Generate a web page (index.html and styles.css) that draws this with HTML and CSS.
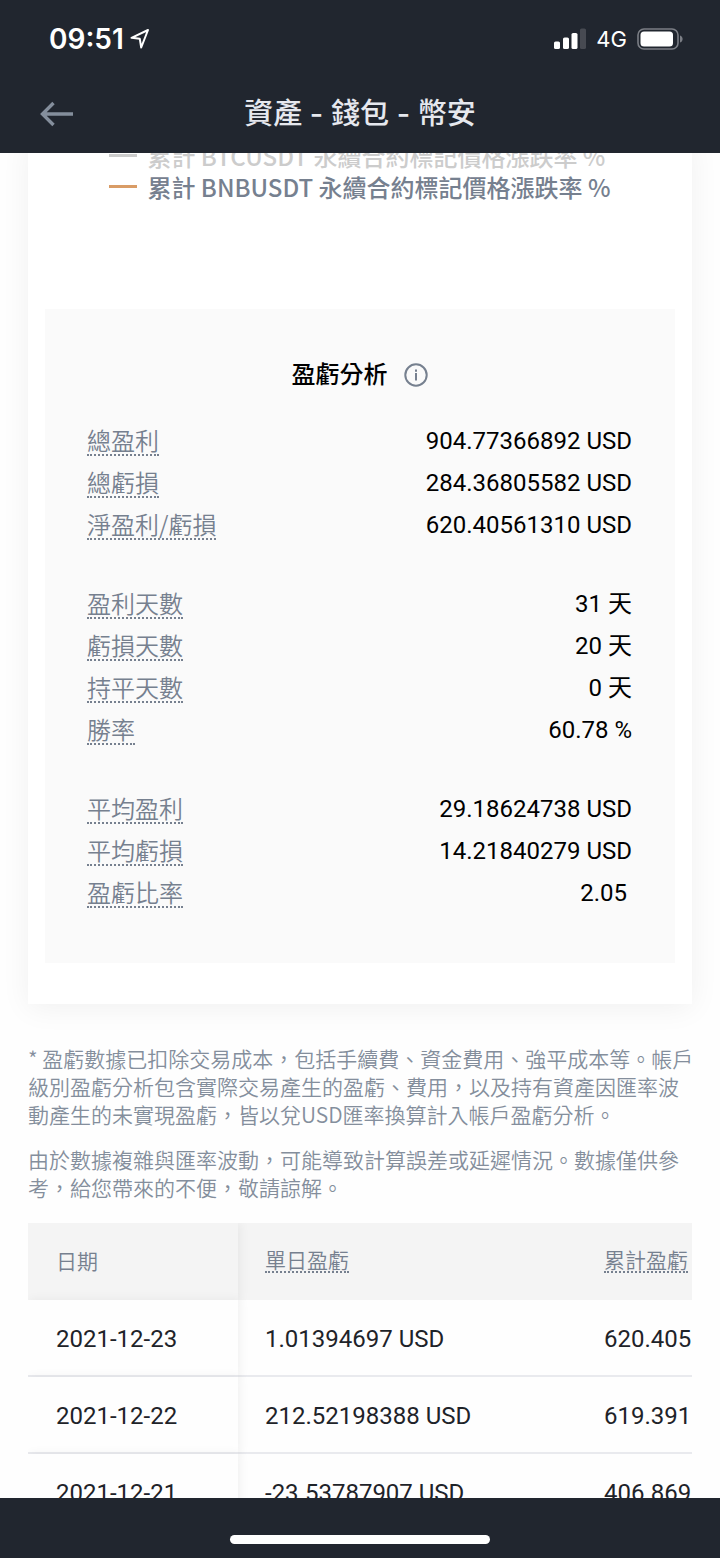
FILE: index.html
```html
<!DOCTYPE html>
<html lang="zh-Hant">
<head>
    <meta charset="UTF-8">
    <meta name="viewport" content="width=device-width, initial-scale=1.0">
    <title>資產 - 錢包 - 幣安</title>
    <link rel="stylesheet" href="styles.css">
</head>
<body>
    <header class="top">
        <div class="status-bar">
            <div class="status-time">
                <span>09:51</span>
                <svg width="20" height="22" viewBox="0 0 20 22" fill="none" stroke="#fff" stroke-width="2" stroke-linejoin="round">
                    <path d="M1.5 9.8 L18 2 L11.2 19.5 L9.8 10.8 Z"/>
                </svg>
            </div>
            <div class="status-icons">
                <svg width="32" height="22" viewBox="0 0 32 22" fill="#fff">
                    <rect x="0" y="13.5" width="6" height="7.5" rx="1.6"/>
                    <rect x="9" y="9.5" width="6" height="11.5" rx="1.6"/>
                    <rect x="17.5" y="5" width="6" height="16" rx="1.6"/>
                    <rect x="26" y="0.5" width="6" height="20.500" rx="1.6" fill="#474a52"/>
                </svg>
                <span class="network">4G</span>
                <svg width="46" height="22" viewBox="0 0 46 22">
                    <rect x="1" y="1" width="40" height="20" rx="6" fill="none" stroke="#7b7e85" stroke-width="1.6"/>
                    <rect x="3.5" y="3.5" width="32.5" height="15" rx="3.5" fill="#fff"/>
                    <path d="M43 7.5 C46.5 8.5 46.5 13.5 43 14.5 Z" fill="#7b7e85"/>
                </svg>
            </div>
        </div>
        <nav class="nav-bar">
            <button class="back" type="button" aria-label="返回">
                <svg width="34" height="26" viewBox="0 0 34 26" fill="none" stroke="#848e9c" stroke-width="3.4">
                    <path d="M2.5 13 H33 M13.5 2 L2.5 13 L13.5 24"/>
                </svg>
            </button>
            <h1>資產 - 錢包 - 幣安</h1>
        </nav>
    </header>

    <main class="content">
        <section class="card">
            <ul class="legend">
                <li class="legend-off">累計 BTCUSDT 永續合約標記價格漲跌率 %</li>
                <li>累計 BNBUSDT 永續合約標記價格漲跌率 %</li>
            </ul>

            <div class="analysis">
                <div class="analysis-title">
                    <h2>盈虧分析</h2>
                    <button class="info" type="button" aria-label="說明">
                        <svg width="24" height="24" viewBox="0 0 24 24" fill="none" stroke="#76808f" stroke-width="2">
                            <circle cx="12" cy="12" r="10.7"/>
                            <path d="M12 10 V17.5 M12 6.5 V8.7"/>
                        </svg>
                    </button>
                </div>

                <dl class="stats">
                    <div class="row"><dt>總盈利</dt><dd>904.77366892 USD</dd></div>
                    <div class="row"><dt>總虧損</dt><dd>284.36805582 USD</dd></div>
                    <div class="row"><dt>淨盈利/虧損</dt><dd>620.40561310 USD</dd></div>
                </dl>
                <dl class="stats">
                    <div class="row"><dt>盈利天數</dt><dd>31 天</dd></div>
                    <div class="row"><dt>虧損天數</dt><dd>20 天</dd></div>
                    <div class="row"><dt>持平天數</dt><dd>0 天</dd></div>
                    <div class="row"><dt>勝率</dt><dd>60.78 %</dd></div>
                </dl>
                <dl class="stats">
                    <div class="row"><dt>平均盈利</dt><dd>29.18624738 USD</dd></div>
                    <div class="row"><dt>平均虧損</dt><dd>14.21840279 USD</dd></div>
                    <div class="row"><dt>盈虧比率</dt><dd class="ratio">2.05</dd></div>
                </dl>
            </div>
        </section>

        <section class="notes">
            <p>* 盈虧數據已扣除交易成本，包括手續費、資金費用、強平成本等。帳戶級別盈虧分析包含實際交易產生的盈虧、費用，以及持有資產因匯率波動產生的未實現盈虧，皆以兌USD匯率換算計入帳戶盈虧分析。</p>
            <p>由於數據複雜與匯率波動，可能導致計算誤差或延遲情況。數據僅供參考，給您帶來的不便，敬請諒解。</p>
        </section>

        <div class="table-wrap">
            <table>
                <thead>
                    <tr>
                        <th class="date">日期</th>
                        <th><span class="hint">單日盈虧</span></th>
                        <th><span class="hint">累計盈虧</span></th>
                    </tr>
                </thead>
                <tbody>
                    <tr>
                        <td class="date">2021-12-23</td>
                        <td>1.01394697 USD</td>
                        <td>620.40561310 USD</td>
                    </tr>
                    <tr>
                        <td class="date">2021-12-22</td>
                        <td>212.52198388 USD</td>
                        <td>619.39166613 USD</td>
                    </tr>
                    <tr>
                        <td class="date">2021-12-21</td>
                        <td>-23.53787907 USD</td>
                        <td>406.86968225 USD</td>
                    </tr>
                </tbody>
            </table>
        </div>
    </main>

    <footer class="home-bar"><span></span></footer>
</body>
</html>
```
FILE: styles.css
```css
* {
    margin: 0;
    padding: 0;
    box-sizing: border-box;
}

body {
    display: flex;
    flex-direction: column;
    height: 100vh;
    overflow: hidden;
    background: #fefefe;
    color: #000;
    font-family: Roboto, "Noto Sans CJK TC", sans-serif;
    font-size: 24px;
}

button {
    display: flex;
    background: none;
    border: none;
    cursor: pointer;
}

/* status bar + title */
.top {
    flex: none;
    background: #21262f;
    color: #fff;
}

.status-bar {
    display: flex;
    justify-content: space-between;
    align-items: center;
    height: 78px;
    padding: 0 37px 0 49px;
}

.status-time {
    display: flex;
    align-items: center;
    gap: 6px;
    font-family: Inter, sans-serif;
    font-size: 28px;
    font-weight: 600;
}

.status-icons {
    display: flex;
    align-items: center;
    gap: 10px;
}

.network {
    font-family: Inter, sans-serif;
    font-size: 22px;
}

.nav-bar {
    display: grid;
    grid-template-columns: 1fr auto 1fr;
    align-items: center;
    height: 75px;
    padding: 0 40px 4px;
}

h1 {
    color: #e6e8ee;
    font-family: Inter, "Noto Sans CJK TC", sans-serif;
    font-size: 29px;
    font-weight: 500;
    line-height: 40px;
}

/* scrolled page */
.content {
    flex: 1;
    min-height: 0;
    overflow: hidden;
    padding: 0 28px;
}

.card {
    padding: 0 17px 41px;
    background: #fff;
    box-shadow: 0 4px 28px rgba(0, 0, 0, 0.06);
}

.legend {
    display: flex;
    flex-direction: column;
    align-items: flex-start;
    width: fit-content;
    margin: -13px auto 0;
    padding-bottom: 107px;
    list-style: none;
    color: #76808f;
    font-family: "Noto Sans CJK TC", sans-serif;
    font-weight: 500;
    line-height: 31px;
}

.legend li {
    display: flex;
    align-items: center;
    gap: 10px;
}

.legend li::before {
    content: "";
    width: 28px;
    height: 3px;
    background: #d99c66;
}

.legend .legend-off {
    color: #ccc;
}

.legend .legend-off::before {
    background: #ccc;
}

.analysis {
    display: flex;
    flex-direction: column;
    gap: 37px;
    padding: 48px 43px 49px 42px;
    background: #fafafa;
}

.analysis-title {
    display: flex;
    justify-content: center;
    align-items: center;
    gap: 16px;
    line-height: 36px;
    margin-bottom: -10px;
}

h2 {
    font-size: 24px;
    font-weight: 500;
}

.row {
    display: flex;
    justify-content: space-between;
    align-items: center;
    height: 42px;
    line-height: 28px;
}

dt, .hint {
    border-bottom: 2px dotted #76808f;
}

dt {
    color: #76808f;
    font-family: "Noto Sans CJK TC", sans-serif;
    font-weight: 350;
}

.ratio {
    padding-right: 5px;
}

.notes {
    display: flex;
    flex-direction: column;
    gap: 17px;
    margin: 40px -4px 22px 0;
    color: #848e9c;
    font-family: "Noto Sans CJK TC", sans-serif;
    font-size: 21px;
    font-weight: 350;
    line-height: 28px;
}

/* daily table */
.table-wrap {
    overflow: hidden;
}

table {
    border-collapse: separate;
    border-spacing: 0;
    table-layout: fixed;
    width: 888px;
}

th, td {
    height: 77px;
    padding: 2px 28px 0 27px;
    text-align: left;
    white-space: nowrap;
}

th {
    padding-bottom: 6px;
    background: #f4f4f4;
    color: #76808f;
    font-family: "Noto Sans CJK TC", sans-serif;
    font-size: 21px;
    font-weight: 350;
    line-height: 24px;
}

td {
    color: #1e2329;
    border-bottom: 2px solid #e9eaee;
}

.date {
    position: relative;
    width: 210px;
    padding-left: 28px;
    box-shadow: 2px 0 10px rgba(0, 0, 0, 0.06);
}

td.date {
    background: #fefefe;
}

.hint {
    display: inline-block;
}

/* home indicator */
.home-bar {
    display: flex;
    flex: none;
    justify-content: center;
    height: 60px;
    padding-top: 37px;
    background: #21262f;
}

.home-bar span {
    width: 36%;
    height: 9px;
    border-radius: 5px;
    background: #fff;
}
```
